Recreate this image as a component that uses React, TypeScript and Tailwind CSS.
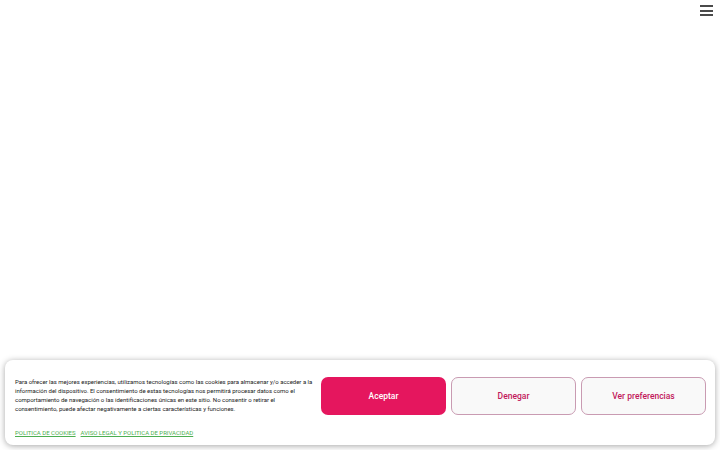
import React from 'react';

const lines = [
  'Para ofrecer las mejores experiencias, utilizamos tecnologías como las cookies para almacenar y/o acceder a la',
  'información del dispositivo. El consentimiento de estas tecnologías nos permitirá procesar datos como el',
  'comportamiento de navegación o las identificaciones únicas en este sitio. No consentir o retirar el',
  'consentimiento, puede afectar negativamente a ciertas características y funciones.',
];

export default function App() {
  return (
    <div
      className="relative flex h-[450px] w-full flex-col bg-white"
      style={{ fontFamily: 'Roboto, "Noto Sans", sans-serif' }}
    >
      {/* Header */}
      <div className="flex justify-end pr-[7px] pt-[5px]">
        <button aria-label="Menu" className="flex w-[13px] flex-col gap-[2.5px]">
          <span className="block h-[2px] w-full bg-[#4a4a4a]" />
          <span className="block h-[2px] w-full bg-[#4a4a4a]" />
          <span className="block h-[2px] w-full bg-[#4a4a4a]" />
        </button>
      </div>

      <div className="flex-1" />

      {/* Cookie banner */}
      <div className="mx-[5px] mb-[5px] flex h-[85px] rounded-[8px] bg-white pl-[10px] pr-[9px] pt-[17px] shadow-[0_1px_6px_rgba(0,0,0,0.35)]">
        <div className="flex w-[305px] shrink-0 flex-col">
          <p className="whitespace-nowrap text-[6px] leading-[9px] tracking-[-0.01px] text-[#222]">
            {lines.map((l) => (
              <span key={l} className="block">{l}</span>
            ))}
          </p>
          <div className="mt-[15px] flex gap-[5px] text-[6px] leading-[9px] text-[#4caf50]">
            <a href="#" className="underline">POLITICA DE COOKIES</a>
            <a href="#" className="underline">AVISO LEGAL Y POLITICA DE PRIVACIDAD</a>
          </div>
        </div>
        <div className="flex flex-1 justify-end gap-[5px]">
          <button className="h-[38px] w-[125px] rounded-[7px] bg-[#e5165e] text-[8.5px] font-medium text-white">
            Aceptar
          </button>
          <button className="h-[38px] w-[125px] rounded-[7px] border border-[#c99bb2] bg-[#f9f9f9] text-[8.5px] font-medium text-[#c2185b]">
            Denegar
          </button>
          <button className="h-[38px] w-[125px] rounded-[7px] border border-[#c99bb2] bg-[#f9f9f9] text-[8.5px] font-medium text-[#c2185b]">
            Ver preferencias
          </button>
        </div>
      </div>
    </div>
  );
}
